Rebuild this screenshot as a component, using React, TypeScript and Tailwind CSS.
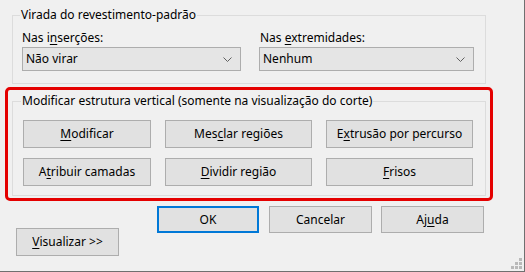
import React from "react";

const FONT = "font-['Segoe_UI','Noto_Sans',sans-serif]";

const Key = ({ children }: { children: React.ReactNode }) => (
  <span className="underline underline-offset-[2px]">{children}</span>
);

const Btn = ({
  w,
  h = "h-[28px]",
  primary = false,
  className = "",
  children,
}: {
  w: string;
  h?: string;
  primary?: boolean;
  className?: string;
  children: React.ReactNode;
}) => (
  <button
    className={`${w} ${h} ${className} flex items-center justify-center bg-[#e1e1e1] text-[12px] leading-[16px] text-black ${
      primary ? "border-2 border-[#0078d7]" : "border border-[#adadad]"
    }`}
  >
    <span>{children}</span>
  </button>
);

const Combo = ({ w, value }: { w: string; value: string }) => (
  <div
    className={`${w} mt-[1px] flex h-[24px] items-center justify-between border border-[#adadad] bg-[#e5e5e5] pl-[3px] pr-[8px] text-[12px]`}
  >
    <span>{value}</span>
    <svg width="9" height="6" viewBox="0 0 9 6" className="mt-[1px]">
      <polyline points="0.5,0.5 4.5,4.5 8.5,0.5" fill="none" stroke="#606060" strokeWidth="1" />
    </svg>
  </div>
);

export default function App() {
  return (
    <div
      className={`relative h-[272px] w-[525px] overflow-hidden border-b border-r border-[#6f6f6f] bg-[#f0f0f0] text-black ${FONT}`}
    >
      {/* Virada do revestimento-padrão */}
      <fieldset className="ml-[12px] mt-[7px] w-[474px] border border-[#dcdcdc] pb-[12px] pl-[9px] pr-[11px]">
        <legend className="-ml-[2px] px-[1px] text-[12px] leading-[16px]">
          Virada do revestimento-padrão
        </legend>
        <div className="flex gap-[18px] pt-[7px]">
          <div className="flex flex-col">
            <label className="h-[16px] text-[12px] leading-[16px]">
              Nas i<Key>n</Key>serções:
            </label>
            <Combo w="w-[219px]" value="Não virar" />
          </div>
          <div className="flex flex-col">
            <label className="h-[16px] pl-[1px] text-[12px] leading-[16px]">
              Nas <Key>e</Key>xtremidades:
            </label>
            <Combo w="w-[215px]" value="Nenhum" />
          </div>
        </div>
      </fieldset>

      {/* highlighted section */}
      <div className="ml-[5px] mt-[3px] w-[488px] rounded-[5px] border-[3px] border-[#e40000] pb-[2px] pl-[4px] pt-[3px]">
        <fieldset className="w-[474px] border border-[#dcdcdc] pb-[9px] pl-[10px]">
          <legend className="-ml-[2px] px-[1px] text-[12px] leading-[16px]">
            Modificar estrutura vertical (somente na visualização do corte)
          </legend>
          <div className="flex flex-col gap-[10px] pt-[11px]">
            <div className="flex gap-[14px]">
              <Btn w="w-[128px]">
                <Key>M</Key>odificar
              </Btn>
              <Btn w="w-[147px]">
                Mes<Key>c</Key>lar regiões
              </Btn>
              <Btn w="w-[147px]">
                E<Key>x</Key>trusão por percurso
              </Btn>
            </div>
            <div className="flex gap-[14px]">
              <Btn w="w-[128px]">
                A<Key>t</Key>ribuir camadas
              </Btn>
              <Btn w="w-[147px]">
                <Key>D</Key>ividir região
              </Btn>
              <Btn w="w-[147px]">
                <Key>F</Key>risos
              </Btn>
            </div>
          </div>
        </fieldset>
      </div>

      {/* dialog buttons */}
      <div className="mt-[5px] flex items-start">
        <Btn w="w-[103px]" className="ml-[16px] mt-[22px]">
          <Key>V</Key>isualizar &gt;&gt;
        </Btn>
        <Btn w="w-[102px]" h="h-[27px]" primary className="ml-[38px]">
          OK
        </Btn>
        <Btn w="w-[103px]" h="h-[27px]" className="ml-[10px]">
          Cancelar
        </Btn>
        <Btn w="w-[103px]" h="h-[27px]" className="ml-[9px]">
          Aj<Key>u</Key>da
        </Btn>
      </div>

      {/* size grip */}
      <svg width="12" height="12" viewBox="0 0 12 12" className="absolute bottom-[2px] right-[2px]">
        <rect x="9" y="1" width="3" height="3" fill="#b9b9b9" />
        <rect x="5" y="5" width="3" height="3" fill="#b9b9b9" />
        <rect x="9" y="5" width="3" height="3" fill="#b9b9b9" />
        <rect x="1" y="9" width="3" height="3" fill="#b9b9b9" />
        <rect x="5" y="9" width="3" height="3" fill="#b9b9b9" />
        <rect x="9" y="9" width="3" height="3" fill="#b9b9b9" />
      </svg>
    </div>
  );
}
